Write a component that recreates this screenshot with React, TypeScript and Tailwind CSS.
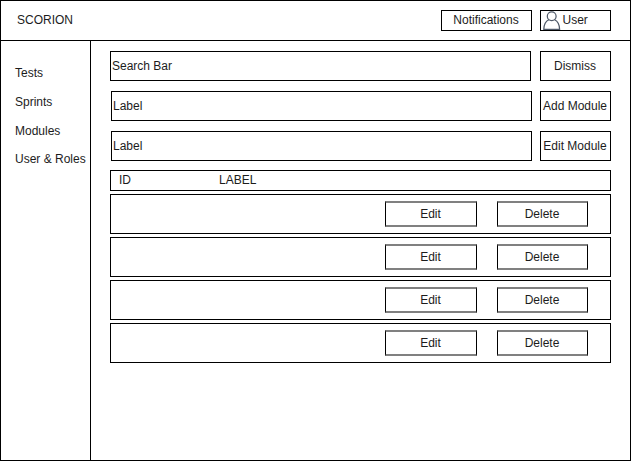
const NAV_ITEMS = [
  { label: 'Tests', space: 'mt-[25px]' },
  { label: 'Sprints', space: 'mt-[15px]' },
  { label: 'Modules', space: 'mt-[15px]' },
  { label: 'User & Roles', space: 'mt-[14px]' },
];

const ROWS = [1, 2, 3, 4];

function UserIcon() {
  return (
    <svg width="18" height="19" viewBox="0 0 18 19" fill="none" stroke="#4f5968" strokeWidth="1.25" className="shrink-0">
      <circle cx="8.7" cy="5.2" r="4.4" />
      <path d="M5.8 8.8C2.8 10.2 1 13.4 0.8 18.3H16.6C16.4 13.4 14.6 10.2 11.6 8.8" />
    </svg>
  );
}

function FieldRow({ text, action, inset }: { text: string; action: string; inset?: boolean }) {
  return (
    <div className="flex h-[30px] justify-between">
      <div className={`flex w-[421px] items-center border border-black pl-px ${inset ? 'ml-px' : ''}`}>
        {text}
      </div>
      <button className="w-[71px] border border-black pr-px whitespace-nowrap">{action}</button>
    </div>
  );
}

export default function App() {
  return (
    <div className="flex h-[461px] w-[631px] flex-col border border-black bg-white font-['Liberation_Sans',Arial,sans-serif] text-[12px] leading-[14px] text-[#1c1c1c]">
      <header className="flex h-10 shrink-0 items-center border-b border-black pr-[19px] pl-4">
        <h1 className="flex-1 pb-px">SCORION</h1>
        <button className="h-[21px] w-[91px] border border-black pr-px pb-px">Notifications</button>
        <button className="ml-2 flex h-[21px] w-[71px] items-center border border-black pl-0.5">
          <UserIcon />
          <span className="ml-px pb-px pl-[0.5px]">User</span>
        </button>
      </header>
      <div className="flex flex-1">
        <nav className="w-[90px] shrink-0 border-r border-black pl-3.5 whitespace-nowrap">
          {NAV_ITEMS.map((item) => (
            <div key={item.label} className={item.space}>
              {item.label}
            </div>
          ))}
        </nav>
        <main className="flex-1 pt-2.5 pr-[19px] pl-[19px]">
          <div className="flex flex-col gap-2.5">
            <FieldRow text="Search Bar" action="Dismiss" />
            <FieldRow text="Label" action="Add Module" inset />
            <FieldRow text="Label" action="Edit Module" inset />
          </div>
          <div className="mt-[9px] flex h-[21px] items-center border border-black pb-px pl-2">
            <span className="w-[100px]">ID</span>
            <span>LABEL</span>
          </div>
          <div className="mt-[3px] flex flex-col gap-[3px]">
            {ROWS.map((row) => (
              <div key={row} className="flex h-10 items-center justify-end gap-5 border border-black pr-[22px]">
                <button className="h-[26px] w-[92px] border-x border-y-2 border-x-black border-y-[#808080] pr-px">Edit</button>
                <button className="h-[26px] w-[91px] border-x border-y-2 border-x-black border-y-[#808080] pr-px">Delete</button>
              </div>
            ))}
          </div>
        </main>
      </div>
    </div>
  );
}
